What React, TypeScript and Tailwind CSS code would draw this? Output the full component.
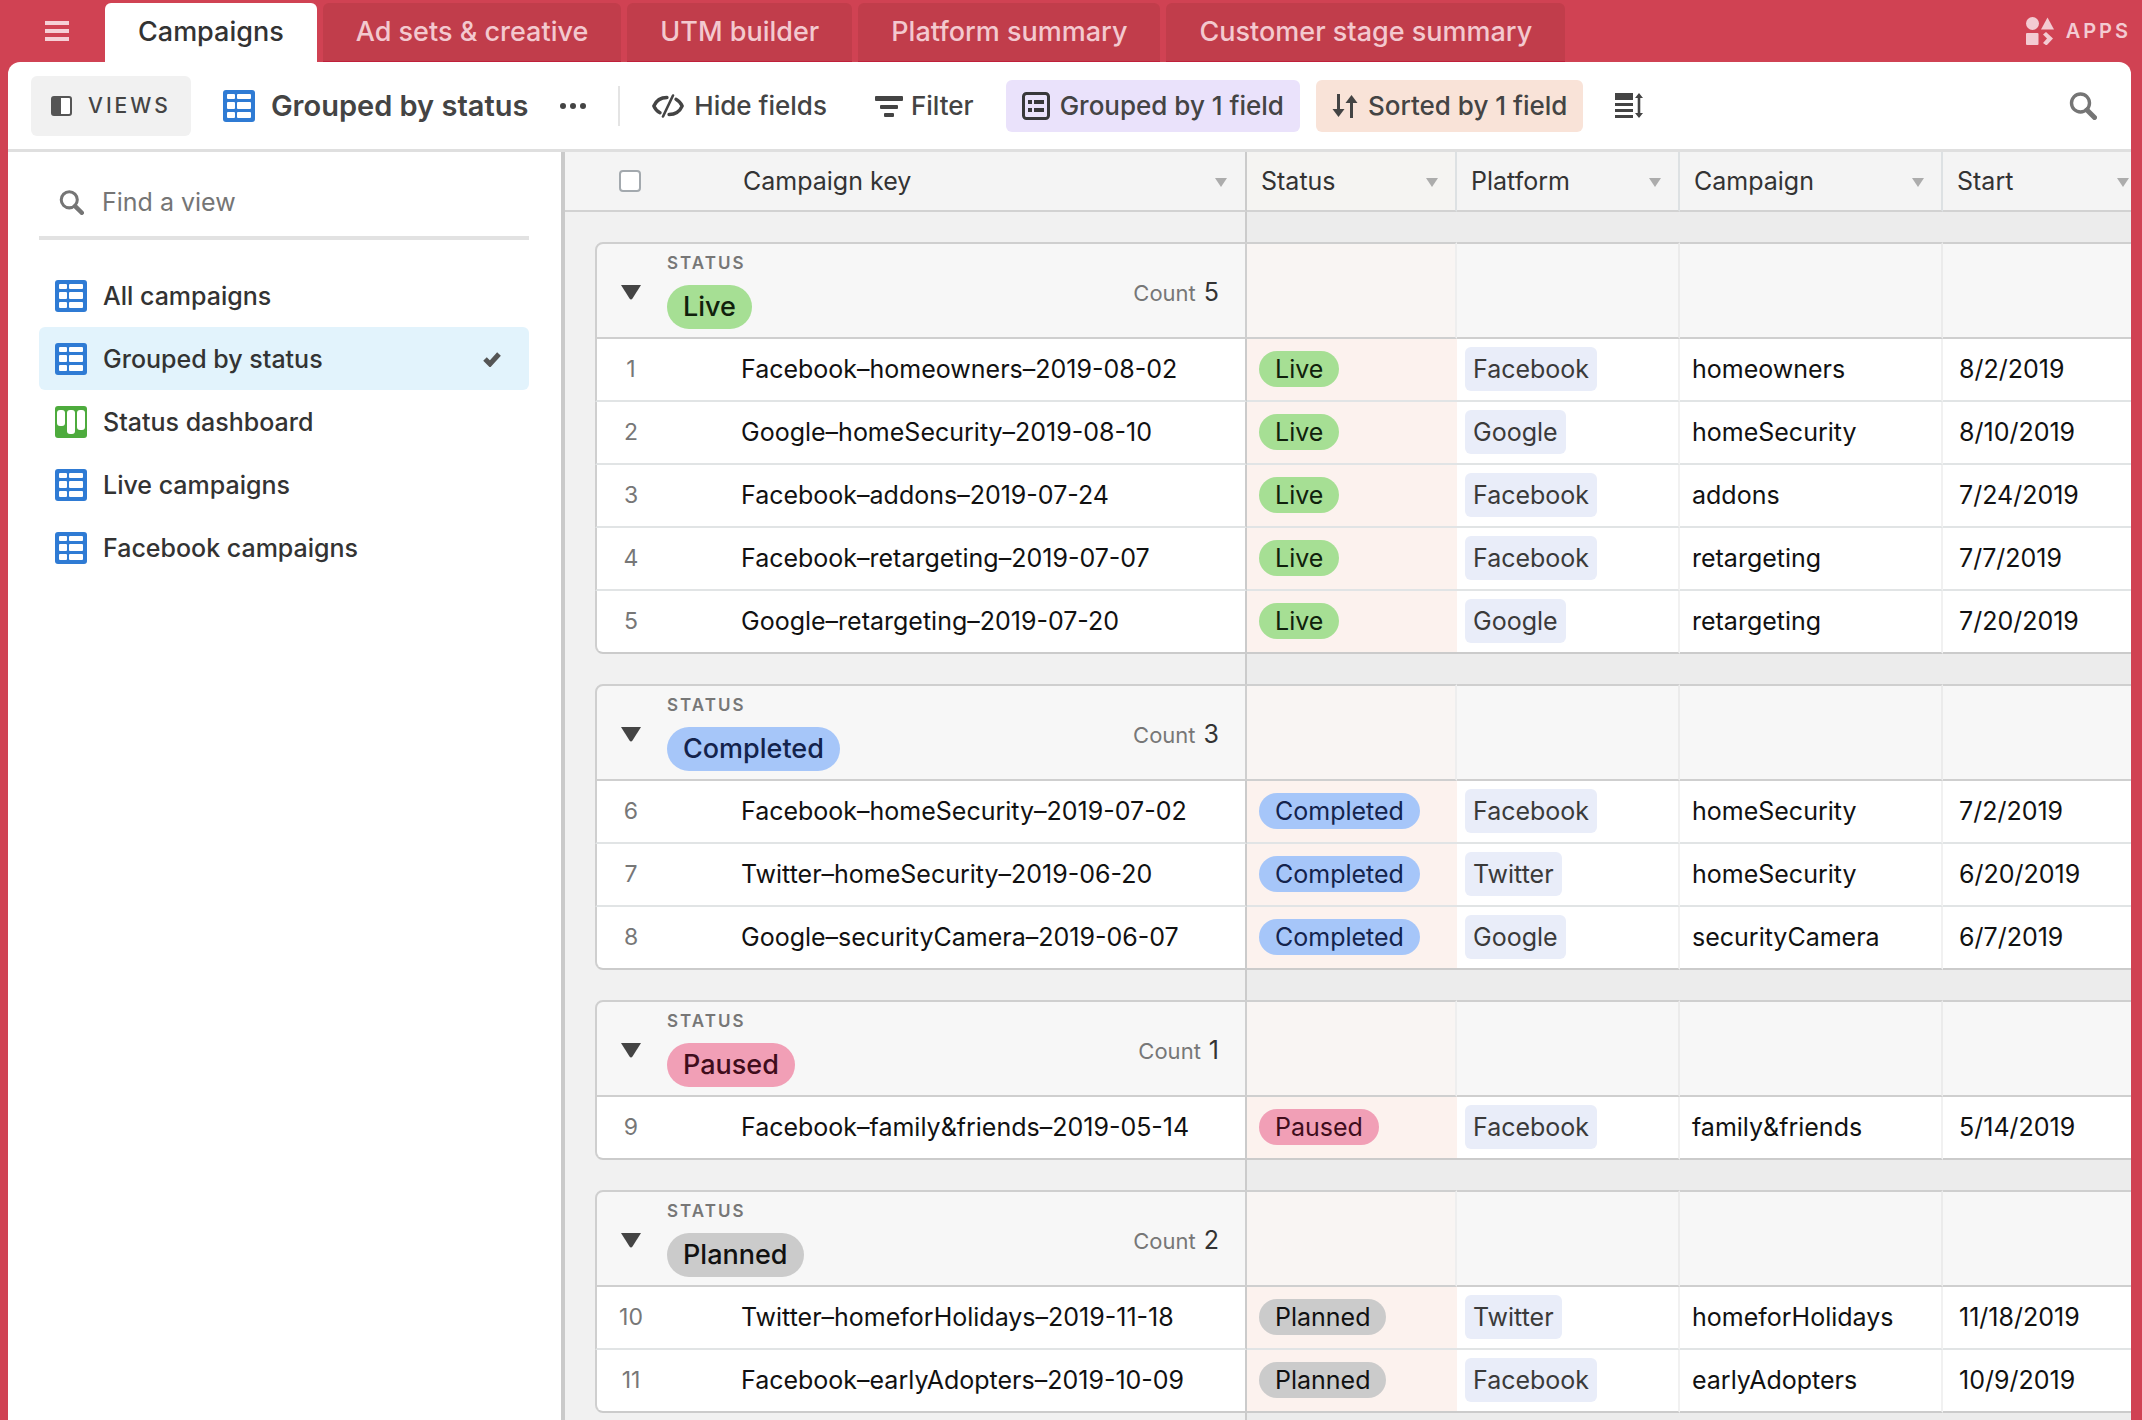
import React, { useState } from 'react';
import clsx from 'clsx';

type Status = 'Live' | 'Completed' | 'Paused' | 'Planned';

interface Campaign {
  id: number;
  platform: string;
  campaign: string;
  date: string;
  start: string;
}

const TABS = ['Campaigns', 'Ad sets & creative', 'UTM builder', 'Platform summary', 'Customer stage summary'];

const VIEWS = [
  { name: 'All campaigns', type: 'grid' },
  { name: 'Grouped by status', type: 'grid' },
  { name: 'Status dashboard', type: 'kanban' },
  { name: 'Live campaigns', type: 'grid' },
  { name: 'Facebook campaigns', type: 'grid' },
];

const GROUPS: { status: Status; rows: Campaign[] }[] = [
  {
    status: 'Live',
    rows: [
      { id: 1, platform: 'Facebook', campaign: 'homeowners', date: '2019-08-02', start: '8/2/2019' },
      { id: 2, platform: 'Google', campaign: 'homeSecurity', date: '2019-08-10', start: '8/10/2019' },
      { id: 3, platform: 'Facebook', campaign: 'addons', date: '2019-07-24', start: '7/24/2019' },
      { id: 4, platform: 'Facebook', campaign: 'retargeting', date: '2019-07-07', start: '7/7/2019' },
      { id: 5, platform: 'Google', campaign: 'retargeting', date: '2019-07-20', start: '7/20/2019' },
    ],
  },
  {
    status: 'Completed',
    rows: [
      { id: 6, platform: 'Facebook', campaign: 'homeSecurity', date: '2019-07-02', start: '7/2/2019' },
      { id: 7, platform: 'Twitter', campaign: 'homeSecurity', date: '2019-06-20', start: '6/20/2019' },
      { id: 8, platform: 'Google', campaign: 'securityCamera', date: '2019-06-07', start: '6/7/2019' },
    ],
  },
  {
    status: 'Paused',
    rows: [{ id: 9, platform: 'Facebook', campaign: 'family&friends', date: '2019-05-14', start: '5/14/2019' }],
  },
  {
    status: 'Planned',
    rows: [
      { id: 10, platform: 'Twitter', campaign: 'homeforHolidays', date: '2019-11-18', start: '11/18/2019' },
      { id: 11, platform: 'Facebook', campaign: 'earlyAdopters', date: '2019-10-09', start: '10/9/2019' },
    ],
  },
];

const STATUS_COLORS: Record<Status, string> = {
  Live: 'bg-[#a6df94] text-[#10210c]',
  Completed: 'bg-[#a6c6f9] text-[#14234c]',
  Paused: 'bg-[#f19fb6] text-[#400d1c]',
  Planned: 'bg-[#cbcbcb] text-[#111111]',
};

const GridIcon = () => (
  <svg width="32" height="32" viewBox="0 0 32 32" className="shrink-0" aria-hidden="true">
    <rect width="32" height="32" rx="3" fill="#2f7bd4" />
    <g fill="#fff">
      <rect x="4" y="4" width="8" height="5" rx="1" />
      <rect x="14" y="4" width="14" height="5" rx="1" />
      <rect x="4" y="12" width="8" height="7" rx="1" />
      <rect x="14" y="12" width="14" height="7" rx="1" />
      <rect x="4" y="22" width="8" height="6" rx="1" />
      <rect x="14" y="22" width="14" height="6" rx="1" />
    </g>
  </svg>
);

const KanbanIcon = () => (
  <svg width="32" height="32" viewBox="0 0 32 32" className="shrink-0" aria-hidden="true">
    <rect width="32" height="32" rx="3" fill="#4dab3d" />
    <g fill="#fff">
      <rect x="2" y="4" width="8" height="16" rx="3" />
      <rect x="12" y="4" width="8" height="24" rx="3" />
      <rect x="22" y="4" width="8" height="20" rx="3" />
    </g>
  </svg>
);

const SearchIcon = ({ size }: { size: number }) => (
  <svg width={size} height={size} viewBox="0 0 28 28" fill="none" stroke="#757575" aria-hidden="true">
    <circle cx="11.5" cy="11" r="9" strokeWidth="3.4" />
    <path d="M18 18l7.5 7.5" strokeWidth="5" strokeLinecap="round" />
  </svg>
);

// Eye outline cut by a slash
const HideIcon = () => (
  <svg width="32" height="24" viewBox="0 0 32 24" fill="none" stroke="#444" strokeLinecap="round" strokeLinejoin="round" aria-hidden="true">
    <path d="M15 3.500C9 3.500 4 7 1.800 12c1.300 3 3.400 5.300 6.200 6.800" strokeWidth="3.300" />
    <path d="M24 5.200c2.800 1.500 4.900 3.800 6.200 6.800-2.200 5-7.200 8.500-13.200 8.500" strokeWidth="3.300" />
    <path d="M21 1.500L11 22.500" strokeWidth="2.600" />
  </svg>
);

const FilterIcon = () => (
  <svg width="28" height="24" viewBox="0 0 28 24" fill="#444" aria-hidden="true">
    <rect x="0" y="2" width="28" height="5" rx="1" />
    <rect x="5" y="11" width="18" height="4" rx="1" />
    <rect x="9" y="19" width="10" height="4" rx="1" />
  </svg>
);

const GroupIcon = () => (
  <svg width="28" height="28" viewBox="0 0 28 28" aria-hidden="true">
    <rect x="1.500" y="1.500" width="25" height="25" rx="3" fill="none" stroke="#38383a" strokeWidth="3" />
    <g fill="#38383a">
      <rect x="6" y="8" width="4" height="4" />
      <rect x="12" y="8" width="10" height="4" />
      <rect x="6" y="16" width="4" height="4" />
      <rect x="12" y="16" width="10" height="4" />
    </g>
  </svg>
);

const SortIcon = () => (
  <svg width="26" height="26" viewBox="0 0 26 26" fill="#444" aria-hidden="true">
    <path d="M5 1h3v15h4.500l-6 8-6-8H5z" />
    <path d="M18 25h3V10h4.500l-6-8-6 8H18z" />
  </svg>
);

const RowHeightIcon = () => (
  <svg width="28" height="26" viewBox="0 0 28 26" fill="#444" aria-hidden="true">
    <rect x="0" y="0" width="18" height="7" />
    <rect x="0" y="10" width="18" height="3" />
    <rect x="0" y="16" width="18" height="3" />
    <rect x="0" y="22" width="18" height="3" />
    <path d="M24 0l4 5h-2.700v15H28l-4 5-4-5h2.700V5H20z" />
  </svg>
);

const AppsIcon = () => (
  <svg width="28" height="28" viewBox="0 0 28 28" fill="currentColor" aria-hidden="true">
    <circle cx="6.500" cy="6.500" r="6.500" />
    <path d="M21.500 0.500L28 12.500H15z" />
    <rect x="0" y="16" width="12.500" height="12" rx="1" />
    <path d="M17 17.500l3-2.500 7 6.500-6.500 7-3.500-2.500 4-4.500z" />
  </svg>
);

const Caret = () => (
  <svg width="12" height="9" viewBox="0 0 12 9" fill="#acacac" className="shrink-0" aria-hidden="true">
    <path d="M0 0h12L6 9z" />
  </svg>
);

const HeaderCell = ({ label, className }: { label: string; className?: string }) => (
  <th scope="col" className={clsx('h-[60px] border-b-2 border-b-[#d2d2d2] pt-0.5 pb-0 pl-3.5 text-left font-normal', className)}>
    <div className="flex items-center justify-between">
      <span>{label}</span>
      <Caret />
    </div>
  </th>
);

const GapRow = ({ last }: { last?: boolean }) => (
  <tr className={last ? 'h-10' : 'h-[30px]'}>
    <td colSpan={3} className="border-r-2 border-[#cbcbcb]" />
    <td colSpan={4} className="bg-[#ececec]" />
  </tr>
);

const GroupSection = ({ status, rows }: { status: Status; rows: Campaign[] }) => {
  const [open, setOpen] = useState(true);
  return (
    <tbody>
      <tr className="h-[97px]">
        <td />
        <td colSpan={2} className="rounded-tl-lg border-2 border-[#cfcfcf] bg-[#f7f7f7] p-0">
          <div className="flex items-center pr-[26px] pl-6">
            <button onClick={() => setOpen(!open)} aria-label={`Toggle ${status}`} className="w-5 pt-1">
              <svg width="20" height="15" viewBox="0 0 20 15" fill="#444" aria-hidden="true">
                <path d="M0 0h20l-8.500 13.500q-1.500 2-3 0z" />
              </svg>
            </button>
            <div className="ml-[26px] flex flex-col items-start gap-[11px] py-2">
              <span className="text-[17px] leading-[22px] font-semibold tracking-[2px] text-[#777]">STATUS</span>
              <span className={clsx('flex h-11 items-center rounded-full px-4 text-[27px] font-medium', STATUS_COLORS[status])}>{status}</span>
            </div>
            <div className="ml-auto flex items-baseline gap-2 pt-1">
              <span className="text-[22px] text-[#777]">Count</span>
              <span className="text-[25px] text-[#333]">{rows.length}</span>
            </div>
          </div>
        </td>
        <td className="border-y-2 border-r-2 border-y-[#cfcfcf] border-r-[#eeeeee] bg-[#f9f5f3]" />
        <td className="border-y-2 border-r-2 border-y-[#cfcfcf] border-r-[#ebebeb] bg-[#f7f7f7]" />
        <td className="border-y-2 border-r-2 border-y-[#cfcfcf] border-r-[#ebebeb] bg-[#f7f7f7]" />
        <td className="border-y-2 border-[#cfcfcf] bg-[#f7f7f7]" />
      </tr>
      {open && rows.map((row, i) => {
        const line = i === rows.length - 1 ? 'border-b-[#cbcbcb]' : 'border-b-[#e1e4e5]';
        return (
          <tr key={row.id} className="h-[63px]">
            <td />
            <td className={clsx('border-b-2 border-l-2 border-l-[#cfcfcf] bg-white p-0 text-center text-[23px] text-[#777]', line, i === rows.length - 1 && 'rounded-bl-lg')}>{row.id}</td>
            <td className={clsx('border-r-2 border-b-2 border-r-[#cbcbcb] bg-white p-0 pl-[76px]', line)}>{`${row.platform}–${row.campaign}–${row.date}`}</td>
            <td className={clsx('border-b-2 bg-[#fcf2ee] p-0 pb-0.5 pl-3', line)}>
              <span className={clsx('flex h-9 w-fit items-center rounded-full px-4 pt-0.5', STATUS_COLORS[status])}>{status}</span>
            </td>
            <td className={clsx('border-r-2 border-b-2 border-r-[#f1f1f1] bg-white p-0 pb-0.5 pl-2', line)}>
              <span className="flex h-11 w-fit items-center rounded-md bg-[#e9edf9] px-2 pt-0.5 text-[#3a3a3a]">{row.platform}</span>
            </td>
            <td className={clsx('border-r-2 border-b-2 border-r-[#f1f1f1] bg-white p-0 pl-3', line)}>{row.campaign}</td>
            <td className={clsx('border-b-2 bg-white p-0 pl-4', line)}>{row.start}</td>
          </tr>
        );
      })}
    </tbody>
  );
};

export default function App() {
  const [activeTab, setActiveTab] = useState('Campaigns');
  const [activeView, setActiveView] = useState('Grouped by status');
  const [query, setQuery] = useState('');

  return (
    <div className="flex h-screen flex-col overflow-hidden bg-[#d04253] pr-[11px] pl-2 font-['Inter','Liberation_Sans',sans-serif] text-[25px] text-[#111]">
      {/* Table tabs */}
      <header className="flex h-[62px] shrink-0 items-end">
        <button aria-label="Menu" className="flex h-full w-[97px] flex-col justify-center gap-1 pl-[37px]">
          <span className="h-1 w-6 bg-[#f6d0d6]" />
          <span className="h-1 w-6 bg-[#f6d0d6]" />
          <span className="h-1 w-6 bg-[#f6d0d6]" />
        </button>
        <nav className="flex gap-1.5">
          {TABS.map(tab => (
            <button
              key={tab}
              onClick={() => setActiveTab(tab)}
              className={clsx(
                'h-[59px] rounded-t-md px-[33px] text-[27px] font-medium whitespace-nowrap',
                tab === activeTab ? 'bg-white text-[#333]' : 'border-b border-[#c01f3b] bg-[#c13d4b] text-[#f3c9cf]'
              )}
            >
              {tab}
            </button>
          ))}
        </nav>
        <button className="ml-auto flex h-full items-center gap-3 text-[20px] font-semibold tracking-[3px] text-[#f3cbd2]">
          <AppsIcon />
          APPS
        </button>
      </header>

      <div className="flex min-h-0 flex-1 flex-col overflow-hidden rounded-t-xl bg-white">
        {/* Toolbar */}
        <div className="flex h-[90px] shrink-0 items-center border-b-3 border-[#dfdfdf] pr-[34px] pl-[23px] text-[26px] font-medium whitespace-nowrap text-[#444]">
          <button className="flex h-[60px] items-center gap-4 rounded-md bg-[#f1f1f1] px-5 text-[21px] tracking-[3px]">
            <svg width="21" height="20" viewBox="0 0 21 20" aria-hidden="true">
              <rect x="1" y="1" width="19" height="18" rx="2" fill="#fff" stroke="#555" strokeWidth="2" />
              <rect x="1" y="1" width="9" height="18" fill="#555" />
            </svg>
            VIEWS
          </button>
          <div className="ml-8 flex items-center gap-4">
            <GridIcon />
            <h1 className="text-[29px] font-semibold">{activeView}</h1>
          </div>
          <button aria-label="View options" className="ml-8">
            <svg width="26" height="6" viewBox="0 0 26 6" fill="#444" aria-hidden="true">
              <circle cx="3" cy="3" r="3" />
              <circle cx="13" cy="3" r="3" />
              <circle cx="23" cy="3" r="3" />
            </svg>
          </button>
          <div className="ml-8 h-10 w-0.5 bg-[#e4e4e4]" />
          <button className="ml-8 flex items-center gap-2.5">
            <HideIcon />
            Hide fields
          </button>
          <button className="ml-12 flex items-center gap-2">
            <FilterIcon />
            Filter
          </button>
          <button className="ml-8 flex h-[52px] items-center gap-2.5 rounded-md bg-[#eae2fb] px-4">
            <GroupIcon />
            Grouped by 1 field
          </button>
          <button className="ml-4 flex h-[52px] items-center gap-2.5 rounded-md bg-[#f9e3d8] px-4">
            <SortIcon />
            Sorted by 1 field
          </button>
          <button aria-label="Row height" className="ml-8">
            <RowHeightIcon />
          </button>
          <button aria-label="Search" className="ml-auto">
            <SearchIcon size={28} />
          </button>
        </div>

        <div className="flex min-h-0 flex-1">
          {/* Views sidebar */}
          <aside className="w-[557px] shrink-0 border-r-4 border-[#cacaca] pt-4 pr-8 pl-[31px]">
            <label className="flex h-[72px] items-center gap-[18px] border-b-4 border-[#e2e2e2] pl-5">
              <SearchIcon size={25} />
              <input
                aria-label="Find a view"
                value={query}
                onChange={e => setQuery(e.target.value)}
                placeholder="Find a view"
                className="min-w-0 flex-1 pt-0.5 outline-none placeholder:text-[#757575]"
              />
            </label>
            <ul className="mt-6">
              {VIEWS.filter(v => v.name.toLowerCase().includes(query.toLowerCase())).map(view => (
                <li key={view.name}>
                  <button
                    onClick={() => setActiveView(view.name)}
                    className={clsx(
                      'flex h-[63px] w-full items-center gap-4 rounded-md pr-7 pl-4 font-medium text-[#333]',
                      view.name === activeView && 'bg-[#e2f3fc]'
                    )}
                  >
                    {view.type === 'grid' ? <GridIcon /> : <KanbanIcon />}
                    <span className="pt-0.5">{view.name}</span>
                    {view.name === activeView && (
                      <svg width="18" height="16" viewBox="0 0 18 16" fill="none" stroke="#555" strokeWidth="5" className="ml-auto" aria-hidden="true">
                        <path d="M2 8l5 5L16 3" />
                      </svg>
                    )}
                  </button>
                </li>
              ))}
            </ul>
          </aside>

          {/* Grid */}
          <main className="min-w-0 flex-1 overflow-hidden bg-[#f1f1f1]">
            <table className="w-full table-fixed border-separate border-spacing-0 whitespace-nowrap">
              <colgroup>
                <col className="w-[30px]" />
                <col className="w-[70px]" />
                <col className="w-[582px]" />
                <col className="w-[210px]" />
                <col className="w-[223px]" />
                <col className="w-[263px]" />
                <col />
              </colgroup>
              <thead className="bg-[#f4f4f4] text-[#333]">
                <tr>
                  <th className="border-b-2 border-[#d2d2d2]" />
                  <th className="border-b-2 border-[#d2d2d2] p-0">
                    <input type="checkbox" aria-label="Select all" className="mx-auto block size-[22px] appearance-none rounded-sm border-2 border-[#a3a9ae] bg-white checked:bg-[#2f7bd4]" />
                  </th>
                  <HeaderCell label="Campaign key" className="border-r-2 border-r-[#cbcbcb] pr-[18px] pl-[78px]" />
                  <HeaderCell label="Status" className="border-r-2 border-r-[#dde1e3] bg-[#f5f4f2] pr-[17px]" />
                  <HeaderCell label="Platform" className="border-r-2 border-r-[#dde1e3] pr-[17px]" />
                  <HeaderCell label="Campaign" className="border-r-2 border-r-[#dde1e3] pr-[17px]" />
                  <HeaderCell label="Start" className="pr-0.5" />
                </tr>
              </thead>
              {GROUPS.map(group => (
                <React.Fragment key={group.status}>
                  <tbody>
                    <GapRow />
                  </tbody>
                  <GroupSection status={group.status} rows={group.rows} />
                </React.Fragment>
              ))}
              <tbody>
                <GapRow last />
              </tbody>
            </table>
          </main>
        </div>
      </div>
    </div>
  );
}
